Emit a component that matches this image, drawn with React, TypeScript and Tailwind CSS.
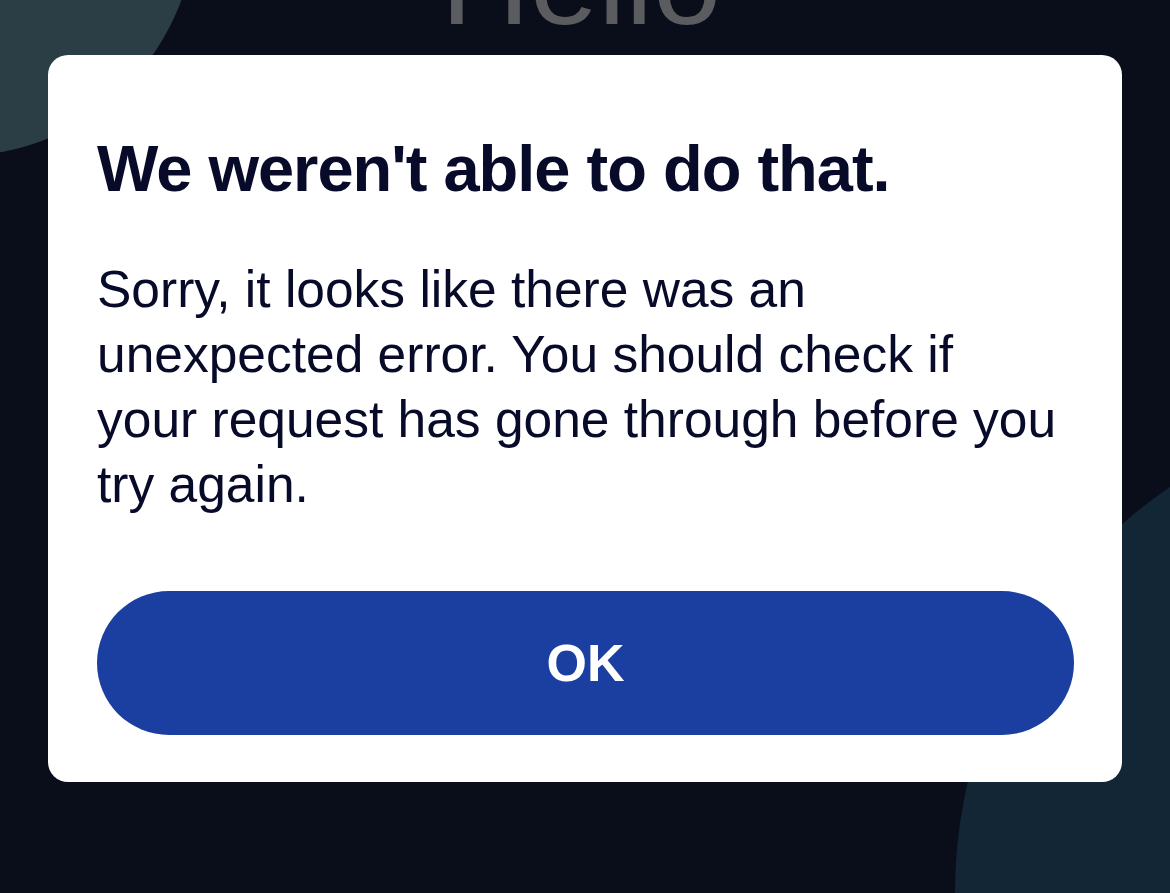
import React from "react";

export default function App() {
  return (
    <div
      className="relative h-[893px] w-[1170px] overflow-hidden bg-[#0a0e1b]"
      style={{ fontFamily: '"Liberation Sans", Arial, sans-serif' }}
    >
      {/* decorative background shapes */}
      <div className="absolute left-[-280px] top-[-320px] h-[476px] w-[476px] rounded-full bg-[#2c3e45]" />
      <div className="absolute left-[955px] top-[402px] h-[982px] w-[982px] rounded-full bg-[#122636]" />
      <div className="absolute left-[441px] top-[-80px] text-[123px] leading-none text-[#5b5c5f]">
        Hello
      </div>

      {/* dialog */}
      <div className="relative px-[48px] pt-[55px]">
        <div className="flex w-[1074px] flex-col rounded-[20px] bg-white pb-[47px] pl-[49px] pr-[48px] pt-[81px] text-[#070a28]">
          <h1 className="text-[65px] font-bold leading-[65px] tracking-[-1px]">
            We weren't able to do that.
          </h1>
          <p className="mt-[56px] text-[51.5px] leading-[65px]">
            Sorry, it looks like there was an
            <br />
            unexpected error. You should check if
            <br />
            your request has gone through before you
            <br />
            try again.
          </p>
          <button className="mt-[74px] flex h-[144px] w-full items-center justify-center rounded-full bg-[#1b3fa0] text-[52px] font-bold text-white">
            OK
          </button>
        </div>
      </div>
    </div>
  );
}
